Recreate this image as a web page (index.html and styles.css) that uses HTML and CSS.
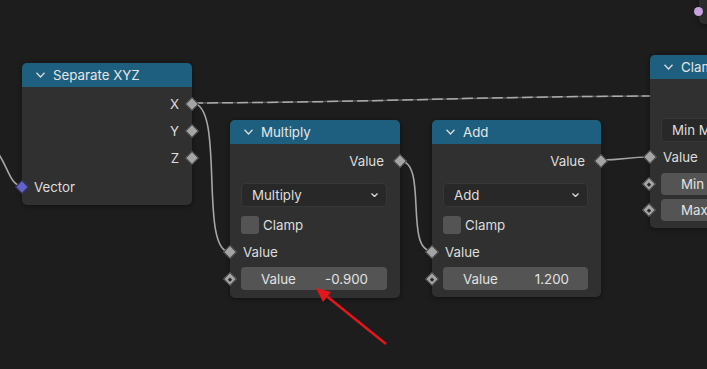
FILE: index.html
```html
<!DOCTYPE html>
<html>

<head>
    <title>Node Editor</title>
    <link rel="stylesheet" href="styles.css">
</head>

<body>
    <div class="editor">
        <svg class="wires" width="707" height="369" viewBox="0 0 707 369">
            <path class="wire" d="M-30,135 C8,140 4,186 22,186" />
            <path class="wire-base" d="M192,103 C400,102 450,97 650,96" />
            <path class="wire-dash" d="M192,103 C400,102 450,97 650,96" />
            <path class="wire" d="M192,103 C226,103 198,252 230,252" />
            <path class="wire" d="M400,161 C428,161 404,251 432,251" />
            <path class="wire" d="M601,160 C625,160 626,157 650,157" />
        </svg>

        <div class="node node-top">
            <i class="sock round"></i>
        </div>

        <div class="node node-sep">
            <div class="node-head">
                <svg class="chev" viewBox="0 0 9 6"><polyline points="0.5,0.8 4.5,5 8.5,0.8" /></svg>
                <span>Separate XYZ</span>
            </div>
            <div class="node-body">
                <div class="row out"><span>X</span><i class="sock"></i></div>
                <div class="row out"><span>Y</span><i class="sock"></i></div>
                <div class="row out"><span>Z</span><i class="sock"></i></div>
                <div class="row in vec-row"><i class="sock vec"></i><span>Vector</span></div>
            </div>
        </div>

        <div class="node node-math node-mul">
            <div class="node-head">
                <svg class="chev" viewBox="0 0 9 6"><polyline points="0.5,0.8 4.5,5 8.5,0.8" /></svg>
                <span>Multiply</span>
            </div>
            <div class="node-body">
                <div class="row out"><span>Value</span><i class="sock"></i></div>
                <div class="select">
                    <span>Multiply</span>
                    <svg class="mini-chev" viewBox="0 0 7 4"><polyline points="0.5,0.5 3.5,3.5 6.5,0.5" /></svg>
                </div>
                <div class="check-row"><span class="check"></span><span>Clamp</span></div>
                <div class="row in"><i class="sock"></i><span>Value</span></div>
                <div class="field">
                    <i class="sock dot"></i>
                    <span>Value</span><span>-0.900</span>
                </div>
            </div>
        </div>

        <div class="node node-math node-add">
            <div class="node-head">
                <svg class="chev" viewBox="0 0 9 6"><polyline points="0.5,0.8 4.5,5 8.5,0.8" /></svg>
                <span>Add</span>
            </div>
            <div class="node-body">
                <div class="row out"><span>Value</span><i class="sock"></i></div>
                <div class="select">
                    <span>Add</span>
                    <svg class="mini-chev" viewBox="0 0 7 4"><polyline points="0.5,0.5 3.5,3.5 6.5,0.5" /></svg>
                </div>
                <div class="check-row"><span class="check"></span><span>Clamp</span></div>
                <div class="row in"><i class="sock"></i><span>Value</span></div>
                <div class="field">
                    <i class="sock dot"></i>
                    <span>Value</span><span>1.200</span>
                </div>
            </div>
        </div>

        <div class="node node-clamp">
            <div class="node-head">
                <svg class="chev" viewBox="0 0 9 6"><polyline points="0.5,0.8 4.5,5 8.5,0.8" /></svg>
                <span>Clamp</span>
            </div>
            <div class="node-body">
                <div class="row out"><i class="sock"></i></div>
                <div class="select">
                    <span>Min Max</span>
                    <svg class="mini-chev" viewBox="0 0 7 4"><polyline points="0.5,0.5 3.5,3.5 6.5,0.5" /></svg>
                </div>
                <div class="row in"><i class="sock"></i><span>Value</span></div>
                <div class="field">
                    <i class="sock dot"></i>
                    <span>Min</span><span>0.000</span>
                </div>
                <div class="field field-max">
                    <i class="sock dot"></i>
                    <span>Max</span><span>1.000</span>
                </div>
            </div>
        </div>

        <svg class="arrow" width="707" height="369" viewBox="0 0 707 369">
            <line x1="386" y1="344" x2="324" y2="294" />
            <polygon points="316,288 331,292 323,302" />
        </svg>
    </div>
</body>

</html>
```

FILE: styles.css
```css
body {
    margin: 0;
    background: #1d1d1d;
}

.editor {
    position: relative;
    width: 707px;
    height: 369px;
    overflow: hidden;
    background: #1d1d1d;
    font-family: Inter, "DejaVu Sans", sans-serif;
    font-size: 13.3px;
    color: #dddddd;
}

/* wires and overlay */
.wires,
.arrow {
    position: absolute;
    left: 0;
    top: 0;
}

.arrow {
    z-index: 5;
}

.wire {
    fill: none;
    stroke: #a6a6a6;
    stroke-width: 1.6;
}

.wire-base {
    fill: none;
    stroke: #555555;
    stroke-width: 1.5;
}

.wire-dash {
    fill: none;
    stroke: #ababab;
    stroke-width: 1.5;
    stroke-dasharray: 11 4;
}

.arrow line {
    stroke: #e3161b;
    stroke-width: 2.6;
}

.arrow polygon {
    fill: #e3161b;
}

/* nodes */
.node {
    position: absolute;
    background: #303030;
    border-radius: 5px;
    box-shadow: 0 1px 5px rgba(0, 0, 0, 0.45);
}

.node-head {
    height: 24px;
    display: flex;
    align-items: center;
    gap: 8px;
    padding-left: 14px;
    background: #1e5e7e;
    border-radius: 5px 5px 0 0;
    color: #e6e6e6;
    white-space: nowrap;
}

.chev {
    width: 9px;
    height: 6px;
}

.chev polyline,
.mini-chev polyline {
    fill: none;
    stroke: #dcdcdc;
    stroke-width: 1.3;
}

.node-sep {
    left: 22px;
    top: 63px;
    width: 170px;
    height: 142px;
}

.node-mul {
    left: 230px;
    top: 120px;
    width: 170px;
    height: 178px;
}

.node-add {
    left: 432px;
    top: 120px;
    width: 169px;
    height: 177px;
}

.node-clamp {
    left: 650px;
    top: 55px;
    width: 170px;
    height: 173px;
}

.node-top {
    left: 699px;
    top: -12px;
    width: 40px;
    height: 36px;
    background: #2c2c2c;
}

/* rows */
.row {
    position: relative;
    height: 22px;
    display: flex;
    align-items: center;
    white-space: nowrap;
}

.row.out {
    justify-content: flex-end;
    padding-right: 16px;
}

.row.in {
    padding-left: 13px;
}

.node-sep .node-body {
    padding-top: 3px;
}

.node-sep .row {
    height: 27px;
}

.node-sep .row.out {
    padding-right: 13px;
}

.node-sep .vec-row {
    margin-top: 2px;
    padding-left: 12px;
}

.node-math .node-body,
.node-clamp .node-body {
    padding-top: 6px;
}

/* sockets */
.sock {
    position: absolute;
    top: 50%;
    width: 8px;
    height: 8px;
    background: #a4a4a4;
    border: 1px solid rgba(20, 20, 20, 0.7);
    transform: translateY(-50%) rotate(45deg);
}

.out .sock {
    right: -5px;
}

.in .sock,
.field .sock {
    left: -5px;
}

.sock.vec {
    background: #6262c9;
    left: -5px;
}

.sock.dot::after {
    content: "";
    position: absolute;
    left: 2.5px;
    top: 2.5px;
    width: 3px;
    height: 3px;
    background: #262626;
}

.sock.round {
    left: -5px;
    top: 19px;
    width: 9px;
    height: 9px;
    border: none;
    border-radius: 50%;
    background: #c8a2de;
    transform: none;
}

/* widgets */
.select {
    height: 22px;
    margin: 11px 13px 0 11px;
    padding: 0 8px 0 10px;
    display: flex;
    align-items: center;
    justify-content: space-between;
    background: #282828;
    border: 1px solid #373737;
    border-radius: 4px;
    white-space: nowrap;
}

.mini-chev {
    width: 7px;
    height: 4px;
}

.check-row {
    height: 22px;
    margin: 7px 0 0 11px;
    display: flex;
    align-items: center;
    gap: 4px;
}

.check {
    width: 18px;
    height: 18px;
    background: #545454;
    border-radius: 3px;
}

.node-math .row.in {
    margin-top: 5px;
}

.node-clamp .row.in {
    margin-top: 4px;
}

.field {
    position: relative;
    height: 23px;
    margin: 4px 13px 0 11px;
    padding: 0 19px 0 20px;
    display: flex;
    align-items: center;
    justify-content: space-between;
    background: #545454;
    border-radius: 4px;
    color: #e2e2e2;
    white-space: nowrap;
}

.field .sock {
    left: -16px;
}

.node-clamp .field {
    height: 22px;
    margin-top: 5px;
    margin-right: 0;
    padding-right: 60px;
}

.node-clamp .field .sock {
    left: -17px;
}

.node-clamp .field-max {
    margin-top: 4px;
}

.node-clamp .select {
    margin-right: 0;
}
```
